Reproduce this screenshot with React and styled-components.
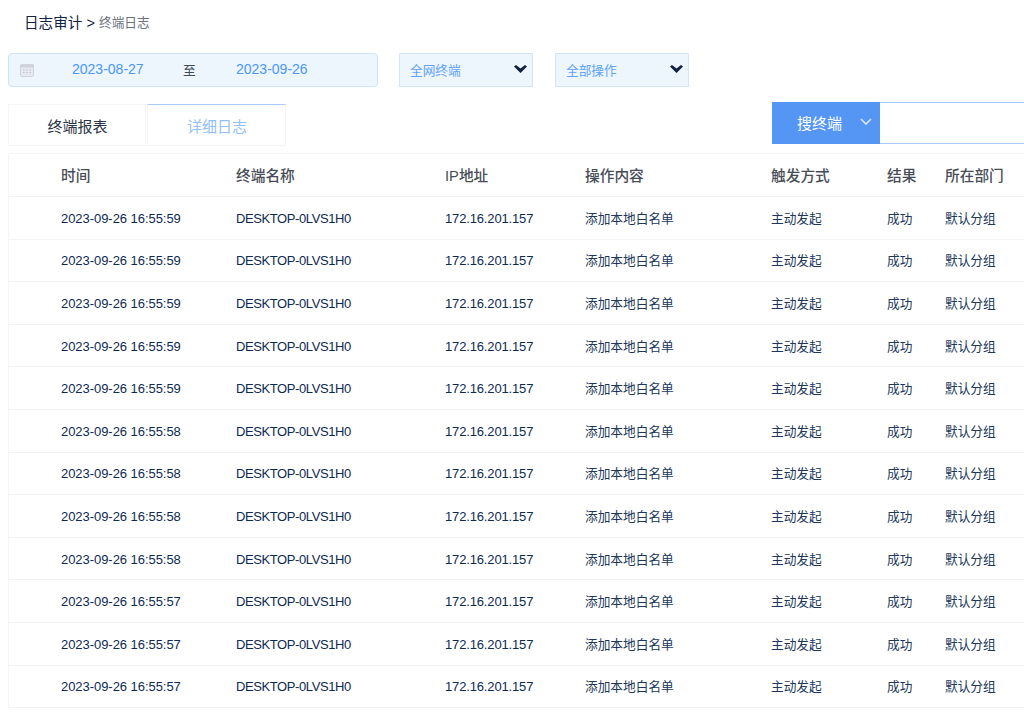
import React from "react";
import styled, { createGlobalStyle } from "styled-components";

const FONT = `"Liberation Sans", "Noto Sans CJK SC", sans-serif`;

const Global = createGlobalStyle`
  html, body { margin: 0; padding: 0; background: #fff; overflow: hidden; }
  body { font-family: ${FONT}; }
`;

const Page = styled.div`
  width: 1024px;
  height: 724px;
  overflow: hidden;
  padding-left: 8px;
  box-sizing: border-box;
`;

const Breadcrumb = styled.div`
  height: 53px;
  padding: 0 0 8px 16px;
  box-sizing: border-box;
  font-size: 14.6px;
  line-height: 18px;
  color: #0f2240;
  display: flex;
  align-items: center;
`;
const Crumb = styled.span`
  font-size: 12.7px;
  color: #6b7280;
  margin-left: 4px;
`;

const Filters = styled.div`
  display: flex;
  height: 34px;
`;
const DateBox = styled.div`
  width: 370px;
  height: 34px;
  box-sizing: border-box;
  background: #edf5fd;
  border: 1px solid #cfe3fa;
  border-radius: 4px;
  display: flex;
  align-items: center;
  font-size: 14px;
  padding-bottom: 2px;
`;
const CalIcon = styled.svg`
  width: 14px;
  height: 14px;
  margin-left: 11px;
  margin-top: 2px;
  flex: none;
`;
const DateVal = styled.span`
  color: #4b97fb;
  width: ${(p) => p.$w}px;
  margin-left: ${(p) => p.$ml}px;
  flex: none;
  white-space: nowrap;
`;
const To = styled.span`
  color: #444c58;
  font-size: 12.7px;
  width: 13px;
  margin-left: 41px;
  flex: none;
`;
const Select = styled.div`
  width: 134px;
  height: 34px;
  box-sizing: border-box;
  margin-left: ${(p) => p.$ml}px;
  background: #edf5fd;
  border: 1px solid #d2e5fb;
  display: flex;
  align-items: center;
  justify-content: space-between;
  padding: 0 5px 2px 10px;
  font-size: 12.7px;
  color: #5fa3fb;
`;
const Caret = styled.svg`
  width: 13px;
  height: 8px;
`;

const TabBar = styled.div`
  display: flex;
  height: 66px;
  align-items: flex-start;
  justify-content: space-between;
`;
const Tabs = styled.div`
  display: flex;
  gap: 1px;
  margin-top: 17px;
`;
const Tab = styled.div`
  width: ${(p) => p.$w}px;
  height: 42px;
  box-sizing: border-box;
  border: 1px solid #f3f5f8;
  border-top: ${(p) => (p.$active ? "1px solid #a9cdfb" : "1px solid #f3f5f8")};
  display: flex;
  align-items: center;
  justify-content: center;
  padding-left: 1px;
  font-size: 15px;
  color: ${(p) => (p.$active ? "#93c0fb" : "#2b3444")};
`;
const Search = styled.div`
  display: flex;
  width: 252px;
  height: 42px;
  margin-top: 15px;
  box-sizing: border-box;
`;
const SearchBtn = styled.div`
  width: 108px;
  background: #5596f5;
  color: #fff;
  font-size: 15px;
  display: flex;
  align-items: center;
  padding: 0 0 2px 25px;
  box-sizing: border-box;
  gap: 18px;
  flex: none;
`;
const Chevron = styled.svg`
  width: 12px;
  height: 7px;
  margin-top: -1px;
`;
const SearchInput = styled.div`
  flex: 1;
  border-top: 1px solid #a9cdfb;
  border-bottom: 1px solid #a9cdfb;
`;

const Table = styled.div`
  border-left: 1px solid #f3f5f8;
  border-top: 1px solid #f3f5f8;
`;
const Row = styled.div`
  display: grid;
  grid-template-columns: 52px 175px 209px 140px 186px 116px 58px 1fr;
  align-items: center;
  height: ${(p) => (p.$head ? 43 : 42.6)}px;
  box-sizing: border-box;
  border-bottom: 1px solid #f1f3f6;
`;
const Cell = styled.div`
  grid-column: ${(p) => p.$col};
  font-size: 12.7px;
  color: #20375a;
  white-space: nowrap;
  padding-bottom: 1px;
`;
const Latin = styled(Cell)`
  font-size: 13px;
  color: #0e2a52;
  padding: 1px 0 0;
  letter-spacing: ${(p) => p.$ls}px;
`;
const Head = styled.div`
  grid-column: ${(p) => p.$col};
  font-size: 14.7px;
  font-weight: 500;
  color: #474d57;
  white-space: nowrap;
  padding-bottom: 2px;
`;

const times = ["59", "59", "59", "59", "59", "58", "58", "58", "58", "57", "57", "57"];
const heads = ["时间", "终端名称", "IP地址", "操作内容", "触发方式", "结果", "所在部门"];

export default function App() {
  return (
    <Page>
      <Global />
      <Breadcrumb>
        日志审计 &gt;<Crumb>终端日志</Crumb>
      </Breadcrumb>
      <Filters>
        <DateBox>
          <CalIcon viewBox="0 0 14 14" fill="none">
            <rect x="0.5" y="1.5" width="13" height="12" rx="1.2" fill="#e6eaf0" stroke="#cfd4db" />
            <rect x="0.5" y="1.5" width="13" height="3" fill="#cfd4db" />
            <path d="M3 7h1.5M6.2 7h1.5M9.5 7h1.5M3 9.5h1.5M6.2 9.5h1.5M9.5 9.5h1.5" stroke="#bfc5cd" />
          </CalIcon>
          <DateVal $ml={38} $w={70}>2023-08-27</DateVal>
          <To>至</To>
          <DateVal $ml={40} $w={70}>2023-09-26</DateVal>
        </DateBox>
        <Select $ml={21}>
          全网终端
          <Caret viewBox="0 0 13 8"><path d="M0 1.5 L2 0 L6.5 3.5 L11 0 L13 1.5 L6.5 8 Z" fill="#10223f" /></Caret>
        </Select>
        <Select $ml={22}>
          全部操作
          <Caret viewBox="0 0 13 8"><path d="M0 1.5 L2 0 L6.5 3.5 L11 0 L13 1.5 L6.5 8 Z" fill="#10223f" /></Caret>
        </Select>
      </Filters>
      <TabBar>
        <Tabs>
          <Tab $w={138}>终端报表</Tab>
          <Tab $w={139} $active>详细日志</Tab>
        </Tabs>
        <Search>
          <SearchBtn>
            搜终端
            <Chevron viewBox="0 0 12 7" fill="none"><path d="M1 1 L6 6 L11 1" stroke="#d7e6fc" strokeWidth="1.6" /></Chevron>
          </SearchBtn>
          <SearchInput />
        </Search>
      </TabBar>
      <Table>
        <Row $head>
          {heads.map((h, i) => (
            <Head key={h} $col={i + 2}>{h}</Head>
          ))}
        </Row>
        {times.map((s, i) => (
          <Row key={i}>
            <Latin $col={2} $ls={-0.05}>{`2023-09-26 16:55:${s}`}</Latin>
            <Latin $col={3} $ls={-0.4}>DESKTOP-0LVS1H0</Latin>
            <Latin $col={4} $ls={-0.15}>172.16.201.157</Latin>
            <Cell $col={5}>添加本地白名单</Cell>
            <Cell $col={6}>主动发起</Cell>
            <Cell $col={7}>成功</Cell>
            <Cell $col={8}>默认分组</Cell>
          </Row>
        ))}
      </Table>
    </Page>
  );
}
